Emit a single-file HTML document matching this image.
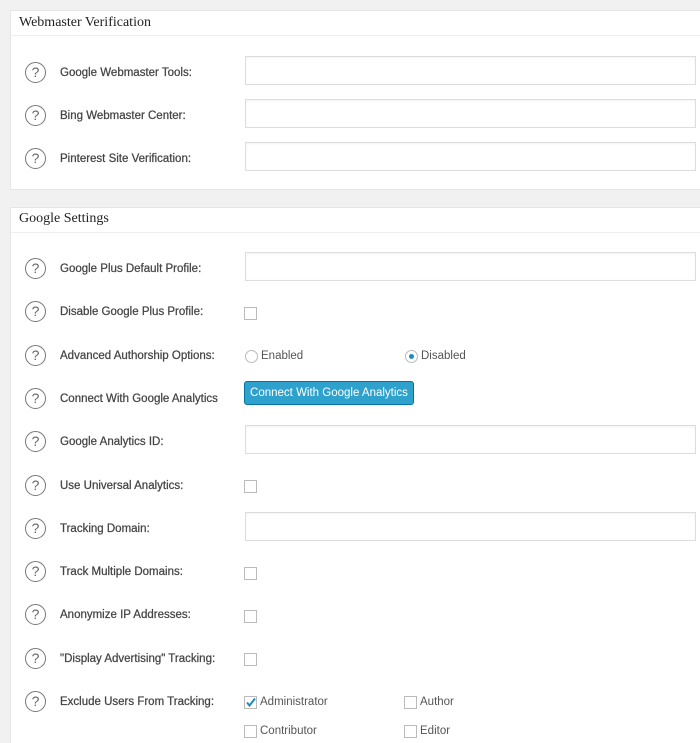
<!DOCTYPE html>
<html style="height:743px;overflow:hidden"><head><meta charset="utf-8"><style>
*{margin:0;padding:0;box-sizing:border-box}
body{width:700px;height:743px;background:#f1f1f1;position:relative;overflow:hidden;font-family:"Liberation Sans",sans-serif}
.panel{position:absolute;left:10px;right:-5px;background:#fff;border:1px solid #e5e5e5}
.hd{position:absolute;left:9px;font-family:"Liberation Serif",serif;font-size:14px;color:#222}
.q{position:absolute;left:25px;width:21px;height:21px;border:1.5px solid #777;border-radius:50%;color:#666;font-size:14px;text-align:center;line-height:18px}
.lb{position:absolute;left:60px;font-size:11.5px;color:#444;-webkit-text-stroke:0.25px #444;margin-top:2px}
.in{position:absolute;left:245px;width:451px;height:29px;border:1px solid #ddd;background:#fff;box-shadow:inset 0 1px 2px rgba(0,0,0,.05)}
.cb{position:absolute;width:13px;height:13px;border:1px solid #bbb;background:#fff}
.rd{position:absolute;width:13px;height:13px;border:1px solid #bbb;border-radius:50%;background:#fff}
.t{position:absolute;font-size:11.5px;color:#555}
.btn{position:absolute;left:244px;top:381px;width:170px;height:24px;background:#2ea2cc;border:1px solid #0074a2;border-radius:3px;color:#fff;font-size:11.5px;text-align:center;line-height:22px}
</style></head><body>
<div class="panel" style="top:10px;height:180px"></div>
<div class="hd" style="top:15px;left:19px">Webmaster Verification</div>
<div style="position:absolute;left:11px;right:0;top:35px;height:1px;background:#eee"></div>

<div class="panel" style="top:207px;height:540px"></div>
<div class="hd" style="top:211px;left:19px">Google Settings</div>
<div style="position:absolute;left:11px;right:0;top:232px;height:1px;background:#eee"></div>

<div class="q" style="top:62px">?</div><div class="lb" style="top:65px">Google Webmaster Tools:</div><div class="in" style="top:56px"></div>
<div class="q" style="top:105px">?</div><div class="lb" style="top:108px">Bing Webmaster Center:</div><div class="in" style="top:99px"></div>
<div class="q" style="top:148px">?</div><div class="lb" style="top:151px">Pinterest Site Verification:</div><div class="in" style="top:142px"></div>

<div class="q" style="top:258px">?</div><div class="lb" style="top:261px">Google Plus Default Profile:</div><div class="in" style="top:252px"></div>
<div class="q" style="top:301px">?</div><div class="lb" style="top:304px">Disable Google Plus Profile:</div><div class="cb" style="left:244px;top:307px"></div>
<div class="q" style="top:345px">?</div><div class="lb" style="top:348px">Advanced Authorship Options:</div>
<div class="rd" style="left:245px;top:350px"></div><div class="t" style="left:261px;top:350px">Enabled</div>
<div class="rd" style="left:405px;top:350px"><div style="width:5px;height:5px;border-radius:50%;background:#1e8cbe;margin:3px"></div></div><div class="t" style="left:421px;top:350px">Disabled</div>
<div class="q" style="top:388px">?</div><div class="lb" style="top:391px">Connect With Google Analytics</div>
<div class="btn">Connect With Google Analytics</div>
<div class="q" style="top:431px">?</div><div class="lb" style="top:434px">Google Analytics ID:</div><div class="in" style="top:425px"></div>
<div class="q" style="top:475px">?</div><div class="lb" style="top:478px">Use Universal Analytics:</div><div class="cb" style="left:244px;top:480px"></div>
<div class="q" style="top:518px">?</div><div class="lb" style="top:521px">Tracking Domain:</div><div class="in" style="top:512px"></div>
<div class="q" style="top:561px">?</div><div class="lb" style="top:564px">Track Multiple Domains:</div><div class="cb" style="left:244px;top:567px"></div>
<div class="q" style="top:604px">?</div><div class="lb" style="top:607px">Anonymize IP Addresses:</div><div class="cb" style="left:244px;top:610px"></div>
<div class="q" style="top:648px">?</div><div class="lb" style="top:651px">"Display Advertising" Tracking:</div><div class="cb" style="left:244px;top:653px"></div>
<div class="q" style="top:691px">?</div><div class="lb" style="top:694px">Exclude Users From Tracking:</div>
<div class="cb" style="left:244px;top:696px"><svg width="13" height="13" style="position:absolute;left:-1px;top:-1px"><path d="M3 6.5 L5.5 9.5 L11 2.5" stroke="#1e8cbe" stroke-width="2" fill="none"/></svg></div><div class="t" style="left:260px;top:696px">Administrator</div>
<div class="cb" style="left:404px;top:696px"></div><div class="t" style="left:420px;top:696px">Author</div>
<div class="cb" style="left:244px;top:725px"></div><div class="t" style="left:260px;top:725px">Contributor</div>
<div class="cb" style="left:404px;top:725px"></div><div class="t" style="left:420px;top:725px">Editor</div>
</body></html>
